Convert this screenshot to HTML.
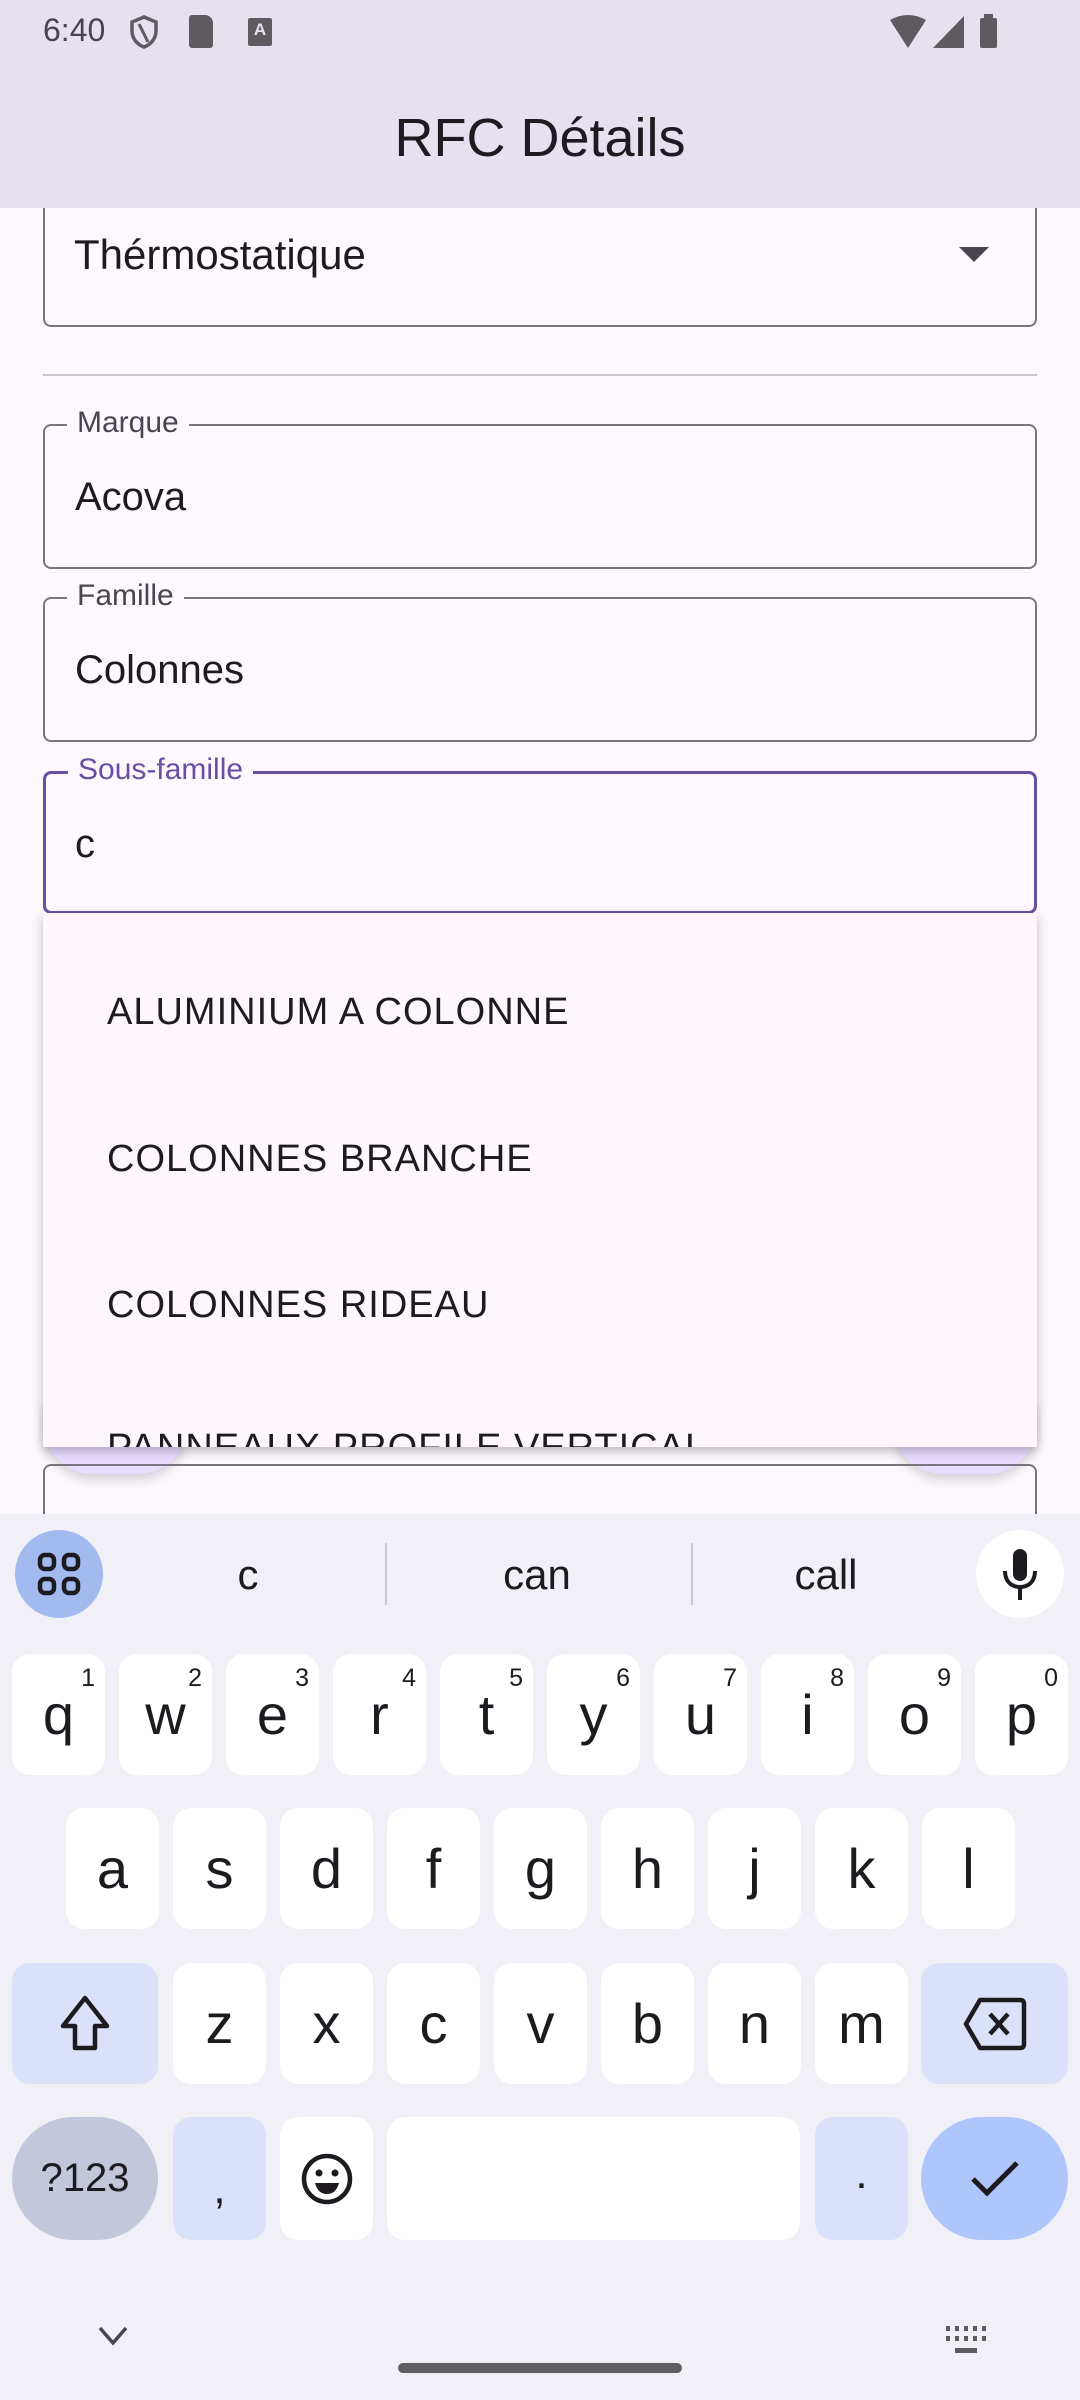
<!DOCTYPE html>
<html><head><meta charset="utf-8"><style>
*{margin:0;padding:0;box-sizing:border-box}
body{width:1080px;height:2400px;position:relative;overflow:hidden;background:#fdf7fe;font-family:"Liberation Sans",sans-serif;color:#1d1b20}
.a{position:absolute}
.box{position:absolute;left:43px;width:994px;border:2px solid #79747e;border-radius:8px}
.lbl{position:absolute;left:22px;top:-20px;background:#fdf7fe;padding:0 10px;font-size:30px;color:#49454f}
.val{position:absolute;left:30px;font-size:40px;color:#1d1b20}
.item{position:absolute;left:107px;font-size:38px;color:#1d1b20;letter-spacing:1px}
.k{position:absolute;width:93px;height:121px;background:#fff;border-radius:18px;display:flex;align-items:center;justify-content:center;font-size:56px;color:#1d1b20}
.k sup{position:absolute;right:10px;top:10px;font-size:25px}
.s{background:#dbe1f8}
</style></head><body>
<div class="a" style="left:0;top:0;width:1080px;height:208px;background:#e7e0ef"></div>
<div class="a" style="left:43px;top:12px;font-size:32px;color:#49454f">6:40</div>
<svg class="a" style="left:128px;top:14px" width="32" height="36" viewBox="0 0 32 36"><path d="M16 3 L28 8 V17 C28 25 22 31 16 33 C10 31 4 25 4 17 V8 Z" fill="none" stroke="#5d5b60" stroke-width="3.5"/><path d="M11 10 L20 28" stroke="#5d5b60" stroke-width="3"/></svg>
<div class="a" style="left:189px;top:15px;width:24px;height:33px;background:#5d5b60;border-radius:3px 8px 3px 3px"></div>
<div class="a" style="left:248px;top:18px;width:24px;height:28px;background:#5d5b60;border-radius:2px;color:#e7e0ef;font-size:17px;font-weight:bold;text-align:center;line-height:24px">A</div>
<svg class="a" style="left:888px;top:14px" width="130" height="36" viewBox="0 0 130 36"><path d="M2 6 Q20 -4 38 6 L20 34 Z" fill="#5d5b60"/><path d="M45 34 L76 34 L76 2 Z" fill="#5d5b60"/><rect x="92" y="4" width="17" height="30" rx="2" fill="#5d5b60"/><rect x="96" y="0" width="9" height="5" fill="#5d5b60"/></svg>
<div class="a" style="left:0;top:105px;width:1080px;text-align:center;font-size:54px;color:#1d1b20;line-height:66px">RFC Détails</div>

<div class="box" style="top:208px;height:119px;border-top:none;border-radius:0 0 8px 8px"></div>
<div class="val" style="left:74px;top:231px;font-size:42px">Thérmostatique</div>
<svg class="a" style="left:959px;top:247px" width="30" height="16"><path d="M0 0 H30 L15 15 Z" fill="#49454f"/></svg>
<div class="a" style="left:43px;top:374px;width:994px;height:2px;background:#cac4d0"></div>

<div class="box" style="top:424px;height:145px"><div class="lbl">Marque</div><div class="val" style="top:49px">Acova</div></div>
<div class="box" style="top:597px;height:145px"><div class="lbl">Famille</div><div class="val" style="top:49px">Colonnes</div></div>
<div class="box" style="top:771px;height:143px;border:3px solid #6750a4"><div class="lbl" style="color:#6750a4;top:-21px">Sous-famille</div><div class="val" style="top:48px;left:29px">c</div></div>

<div class="a" style="left:43px;top:1400px;width:145px;height:74px;background:#e9ddff;border-radius:0 0 50px 50px;box-shadow:0 6px 10px rgba(0,0,0,.15)"></div>
<div class="a" style="left:893px;top:1400px;width:144px;height:74px;background:#e9ddff;border-radius:0 0 50px 50px;box-shadow:0 6px 10px rgba(0,0,0,.15)"></div>
<div class="box" style="top:1464px;height:120px;border-bottom:none;border-radius:8px 8px 0 0"></div>

<div class="a" style="left:43px;top:913px;width:994px;height:534px;background:#fdf7fd;box-shadow:0 4px 10px rgba(0,0,0,.25);overflow:hidden">
<div class="item" style="left:64px;top:78px">ALUMINIUM A COLONNE</div>
<div class="item" style="left:64px;top:225px">COLONNES BRANCHE</div>
<div class="item" style="left:64px;top:371px">COLONNES RIDEAU</div>
<div class="item" style="left:64px;top:514px">PANNEAUX PROFILE VERTICAL</div>
</div>

<div class="a" style="left:0;top:1514px;width:1080px;height:886px;background:#f0f0f6"></div>
<div class="a" style="left:15px;top:1530px;width:88px;height:88px;border-radius:50%;background:#a3baf0"></div>
<svg class="a" style="left:37px;top:1552px" width="44" height="44" viewBox="0 0 44 44" fill="none" stroke="#1d1b20" stroke-width="4.5"><rect x="3" y="3" width="14" height="14" rx="5"/><rect x="27" y="3" width="14" height="14" rx="5"/><rect x="3" y="27" width="14" height="14" rx="5"/><rect x="27" y="27" width="14" height="14" rx="5"/></svg>
<div class="a" style="left:200px;top:1551px;width:96px;text-align:center;font-size:42px">c</div>
<div class="a" style="left:477px;top:1551px;width:120px;text-align:center;font-size:42px">can</div>
<div class="a" style="left:766px;top:1551px;width:120px;text-align:center;font-size:42px">call</div>
<div class="a" style="left:385px;top:1543px;width:2px;height:62px;background:#c8c8cf"></div>
<div class="a" style="left:691px;top:1543px;width:2px;height:62px;background:#c8c8cf"></div>
<div class="a" style="left:976px;top:1530px;width:88px;height:88px;border-radius:50%;background:#fff"></div>
<svg class="a" style="left:1000px;top:1549px" width="40" height="52" viewBox="0 0 40 52"><rect x="13" y="0" width="14" height="32" rx="7" fill="#1d1b20"/><path d="M5 22 C5 32 11 38 20 38 C29 38 35 32 35 22" fill="none" stroke="#1d1b20" stroke-width="4"/><path d="M20 38 V51" stroke="#1d1b20" stroke-width="4"/></svg>

<div class="k" style="left:12px;top:1654px">q<sup>1</sup></div>
<div class="k" style="left:119px;top:1654px">w<sup>2</sup></div>
<div class="k" style="left:226px;top:1654px">e<sup>3</sup></div>
<div class="k" style="left:333px;top:1654px">r<sup>4</sup></div>
<div class="k" style="left:440px;top:1654px">t<sup>5</sup></div>
<div class="k" style="left:547px;top:1654px">y<sup>6</sup></div>
<div class="k" style="left:654px;top:1654px">u<sup>7</sup></div>
<div class="k" style="left:761px;top:1654px">i<sup>8</sup></div>
<div class="k" style="left:868px;top:1654px">o<sup>9</sup></div>
<div class="k" style="left:975px;top:1654px">p<sup>0</sup></div>
<div class="k" style="left:66px;top:1808px">a</div>
<div class="k" style="left:173px;top:1808px">s</div>
<div class="k" style="left:280px;top:1808px">d</div>
<div class="k" style="left:387px;top:1808px">f</div>
<div class="k" style="left:494px;top:1808px">g</div>
<div class="k" style="left:601px;top:1808px">h</div>
<div class="k" style="left:708px;top:1808px">j</div>
<div class="k" style="left:815px;top:1808px">k</div>
<div class="k" style="left:922px;top:1808px">l</div>
<div class="k s" style="left:12px;top:1963px;width:146px"><svg width="56" height="60" viewBox="0 0 56 60"><path d="M28 4 L50 32 H38 V54 H18 V32 H6 Z" fill="none" stroke="#1d1b20" stroke-width="4.5" stroke-linejoin="round"/></svg></div>
<div class="k" style="left:173px;top:1963px">z</div>
<div class="k" style="left:280px;top:1963px">x</div>
<div class="k" style="left:387px;top:1963px">c</div>
<div class="k" style="left:494px;top:1963px">v</div>
<div class="k" style="left:601px;top:1963px">b</div>
<div class="k" style="left:708px;top:1963px">n</div>
<div class="k" style="left:815px;top:1963px">m</div>
<div class="k s" style="left:921px;top:1963px;width:147px"><svg width="66" height="56" viewBox="0 0 66 56"><path d="M18 4 H58 Q62 4 62 8 V48 Q62 52 58 52 H18 L4 28 Z" fill="none" stroke="#1d1b20" stroke-width="4.5" stroke-linejoin="round"/><path d="M28 18 L46 38 M46 18 L28 38" stroke="#1d1b20" stroke-width="4.5"/></svg></div>
<div class="k" style="left:12px;top:2117px;width:146px;height:123px;border-radius:62px;background:#c2c7dc;font-size:40px">?123</div>
<div class="k s" style="left:173px;top:2117px;height:123px;font-size:44px;padding-top:20px">,</div>
<div class="k" style="left:280px;top:2117px;height:123px"><svg width="54" height="54" viewBox="0 0 54 54"><circle cx="27" cy="27" r="23" fill="none" stroke="#1d1b20" stroke-width="4.5"/><circle cx="19" cy="21" r="3.5" fill="#1d1b20"/><circle cx="35" cy="21" r="3.5" fill="#1d1b20"/><path d="M15 31 H39 Q36 42 27 42 Q18 42 15 31 Z" fill="#1d1b20"/></svg></div>
<div class="k" style="left:387px;top:2117px;width:413px;height:123px"></div>
<div class="k s" style="left:815px;top:2117px;height:123px;font-size:44px;padding-bottom:10px">.</div>
<div class="k" style="left:921px;top:2117px;width:147px;height:123px;border-radius:62px;background:#aec6fb"><svg width="50" height="40" viewBox="0 0 50 40"><path d="M3 20 L17 34 L47 4" fill="none" stroke="#1d1b20" stroke-width="5"/></svg></div>

<svg class="a" style="left:98px;top:2326px" width="30" height="20"><path d="M2 2 L15 17 L28 2" fill="none" stroke="#49454f" stroke-width="3.5"/></svg>
<svg class="a" style="left:946px;top:2326px" width="42" height="32" viewBox="0 0 42 32" fill="#5d5b60"><rect x="0" y="0" width="4" height="5"/><rect x="9" y="0" width="4" height="5"/><rect x="18" y="0" width="4" height="5"/><rect x="27" y="0" width="4" height="5"/><rect x="36" y="0" width="4" height="5"/><rect x="0" y="10" width="4" height="5"/><rect x="9" y="10" width="4" height="5"/><rect x="18" y="10" width="4" height="5"/><rect x="27" y="10" width="4" height="5"/><rect x="36" y="10" width="4" height="5"/><rect x="9" y="22" width="22" height="5"/></svg>
<div class="a" style="left:398px;top:2363px;width:284px;height:10px;border-radius:5px;background:#5f5f62"></div>
</body></html>
